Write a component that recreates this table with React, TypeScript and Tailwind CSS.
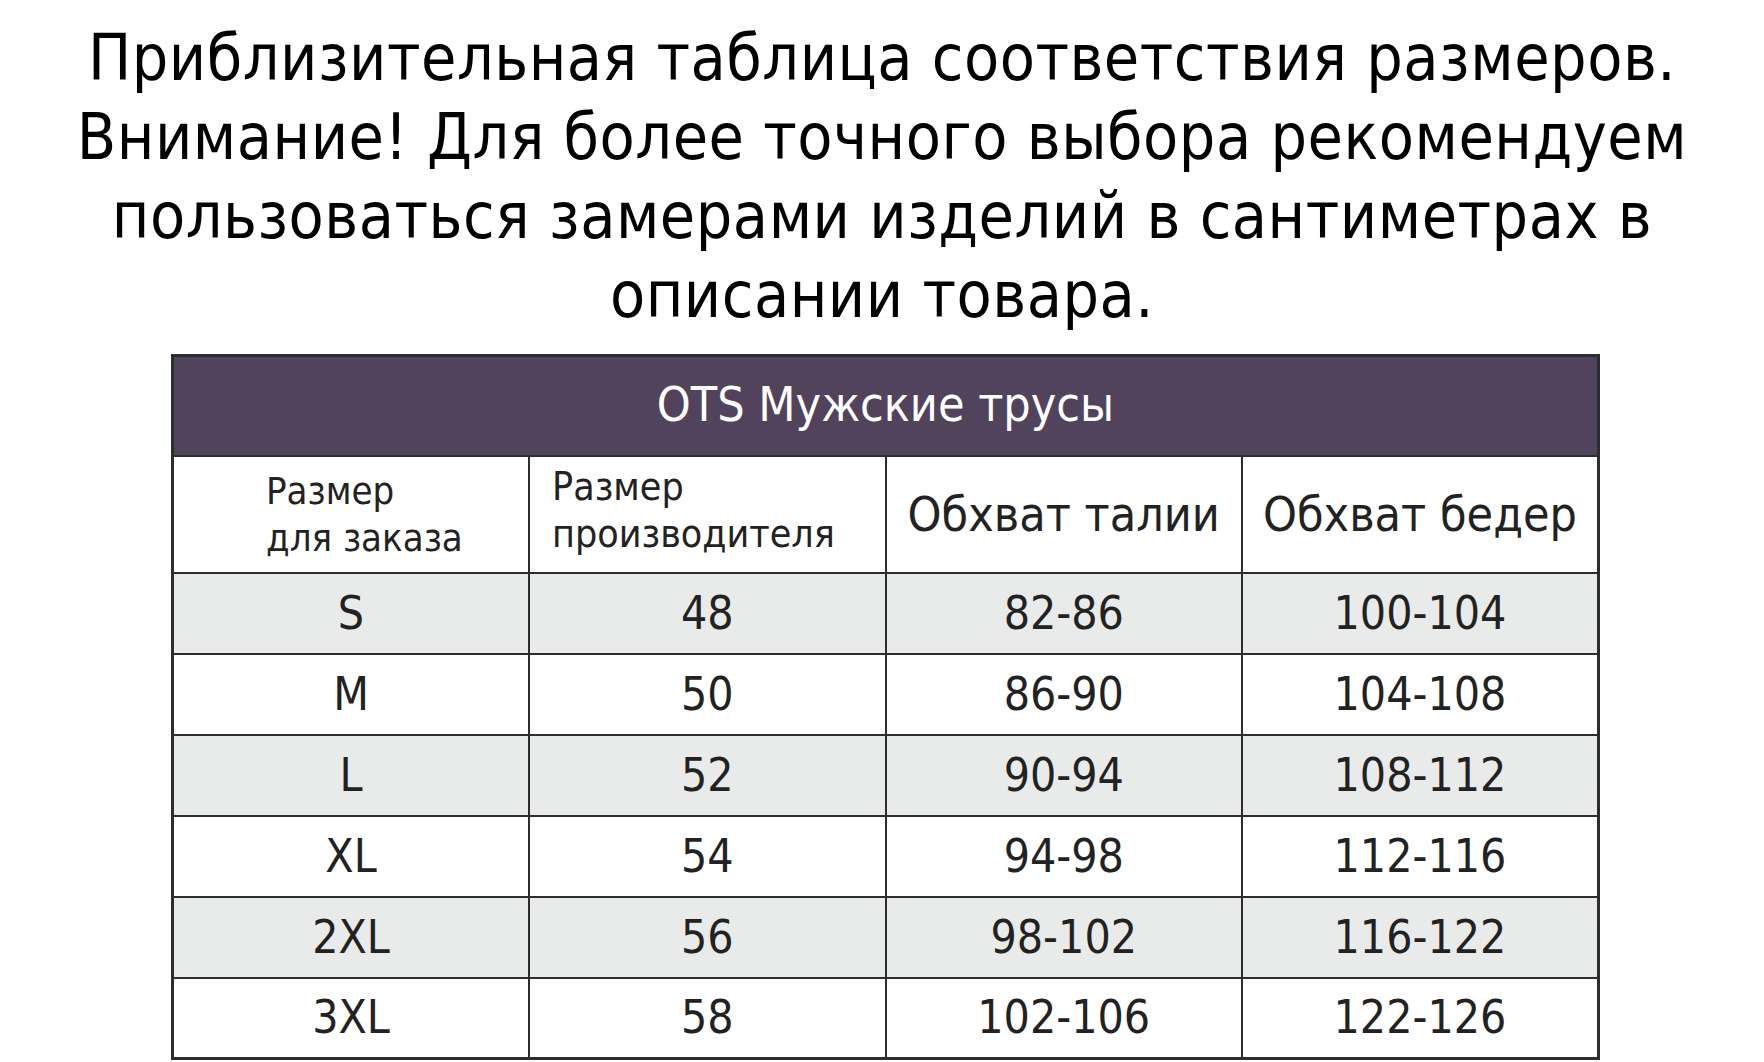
import React from "react";

const rows = [
  { size: "S", maker: "48", waist: "82-86", hips: "100-104" },
  { size: "M", maker: "50", waist: "86-90", hips: "104-108" },
  { size: "L", maker: "52", waist: "90-94", hips: "108-112" },
  { size: "XL", maker: "54", waist: "94-98", hips: "112-116" },
  { size: "2XL", maker: "56", waist: "98-102", hips: "116-122" },
  { size: "3XL", maker: "58", waist: "102-106", hips: "122-126" },
];

const font = { fontFamily: "'DejaVu Sans Condensed', 'Liberation Sans', sans-serif" };

export default function App() {
  return (
    <div className="w-[1764px] h-[1062px] bg-white overflow-hidden" style={font}>
      {/* Title */}
      <div className="pt-[19px] text-center text-black text-[64px] leading-[79px] tracking-[0.5px]">
        <p>Приблизительная таблица соответствия размеров.</p>
        <p>Внимание! Для более точного выбора рекомендуем</p>
        <p>пользоваться замерами изделий в сантиметрах в</p>
        <p>описании товара.</p>
      </div>

      {/* Size table */}
      <table className="ml-[171px] mt-[19px] w-[1429px] border-collapse border-[3px] border-[#2d2d2d] table-fixed text-[#222]">
        <thead>
          <tr className="h-[100px] bg-[#52435c]">
            <th colSpan={4} className="text-white text-[48px] font-normal text-center">
              <div className="pb-[4px]">OTS Мужские трусы</div>
            </th>
          </tr>
          <tr className="h-[117px] bg-white">
            <th className="border-2 border-[#2d2d2d] font-normal text-left align-middle pl-[92px] text-[38px] leading-[47px]">
              <div className="pt-[2px]">Размер<br />для заказа</div>
            </th>
            <th className="border-2 border-[#2d2d2d] font-normal text-left align-middle pl-[22px] text-[39px] leading-[47px]">
              <div className="pb-[8px]">Размер<br />производителя</div>
            </th>
            <th className="border-2 border-[#2d2d2d] font-normal text-center text-[48px]">
              Обхват талии
            </th>
            <th className="border-2 border-[#2d2d2d] font-normal text-center text-[48px]">
              Обхват бедер
            </th>
          </tr>
        </thead>
        <tbody>
          {rows.map((r, i) => (
            <tr key={r.size} className={i % 2 === 0 ? "h-[81px] bg-[#e9ebea]" : "h-[81px] bg-white"}>
              <td className="border-2 border-[#2d2d2d] text-center text-[46px]">{r.size}</td>
              <td className="border-2 border-[#2d2d2d] text-center text-[46px]">{r.maker}</td>
              <td className="border-2 border-[#2d2d2d] text-center text-[46px]">{r.waist}</td>
              <td className="border-2 border-[#2d2d2d] text-center text-[46px]">{r.hips}</td>
            </tr>
          ))}
        </tbody>
      </table>
    </div>
  );
}
